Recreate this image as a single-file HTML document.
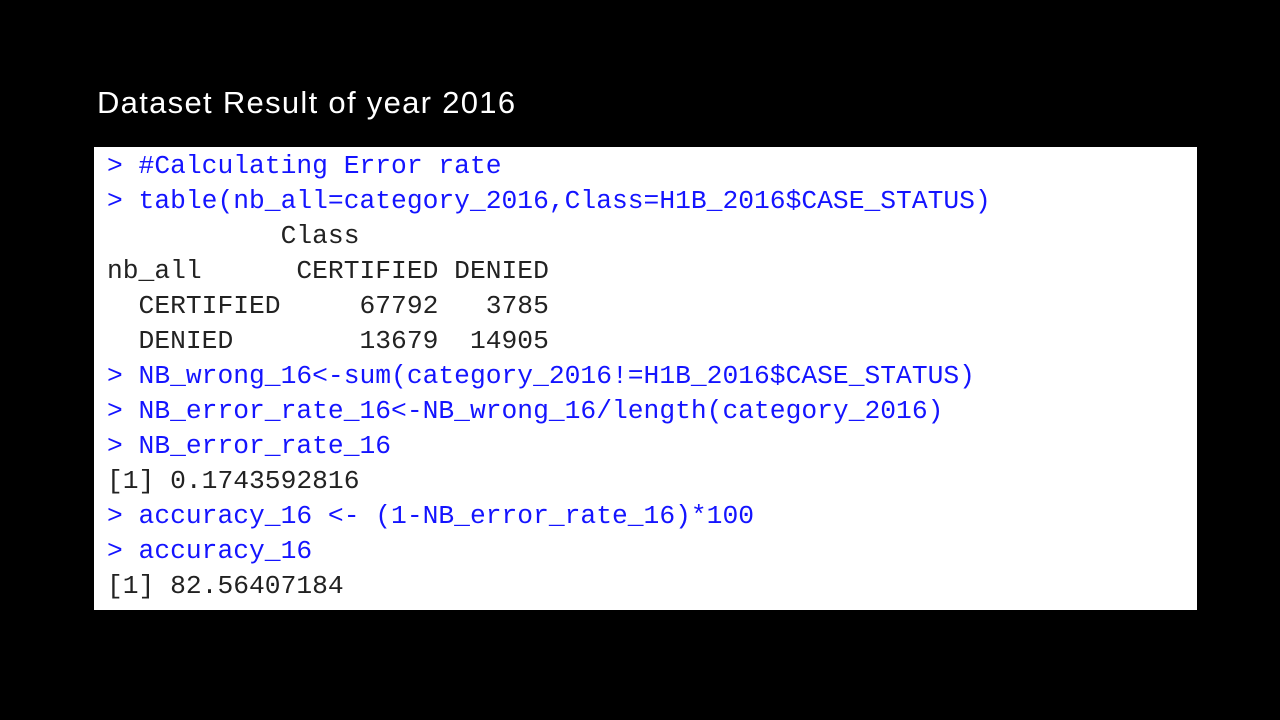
<!DOCTYPE html>
<html><head><style>
body{margin:0;width:1280px;height:720px;background:#000;overflow:hidden;position:relative;font-family:"Liberation Sans",sans-serif}
.t{position:absolute;left:97px;top:85px;color:#fff;font-size:31px;letter-spacing:1.3px}
.box{position:absolute;left:94px;top:147px;width:1103px;height:463px;background:#fff}
pre{margin:0;position:absolute;left:107px;top:149px;font-family:"Liberation Mono",monospace;font-size:26.3px;line-height:35px;color:#222}
.b{color:#1414ff}
</style></head><body>
<div class="t">Dataset Result of year 2016</div>
<div class="box"></div>
<pre><span class="b">&gt; #Calculating Error rate
&gt; table(nb_all=category_2016,Class=H1B_2016$CASE_STATUS)</span>
           Class
nb_all      CERTIFIED DENIED
  CERTIFIED     67792   3785
  DENIED        13679  14905
<span class="b">&gt; NB_wrong_16&lt;-sum(category_2016!=H1B_2016$CASE_STATUS)
&gt; NB_error_rate_16&lt;-NB_wrong_16/length(category_2016)
&gt; NB_error_rate_16</span>
[1] 0.1743592816
<span class="b">&gt; accuracy_16 &lt;- (1-NB_error_rate_16)*100
&gt; accuracy_16</span>
[1] 82.56407184</pre>
</body></html>
